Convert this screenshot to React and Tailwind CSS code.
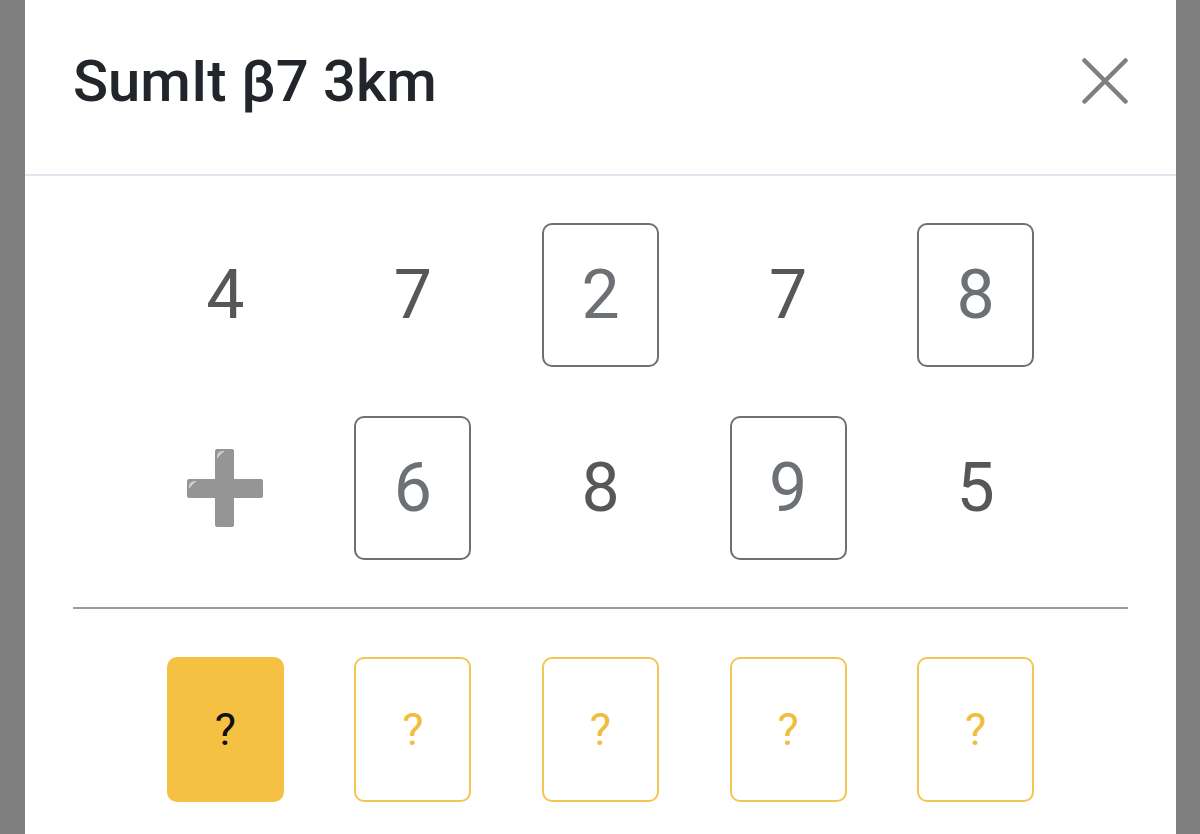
import React from "react";

const topRow = [
  { v: "4", boxed: false },
  { v: "7", boxed: false },
  { v: "2", boxed: true },
  { v: "7", boxed: false },
  { v: "8", boxed: true },
];

const bottomRow = [
  { v: "6", boxed: true },
  { v: "8", boxed: false },
  { v: "9", boxed: true },
  { v: "5", boxed: false },
];

function CloseIcon() {
  return (
    <svg width="46" height="46" viewBox="0 0 46 46" fill="none">
      <path
        d="M2.5 2.5L43.5 43.5M43.5 2.5L2.5 43.5"
        stroke="#7f7f7f"
        strokeWidth="4.5"
        strokeLinecap="round"
      />
    </svg>
  );
}

function PlusEmoji() {
  return (
    <svg width="76" height="78" viewBox="0 0 76 78">
      <rect x="28" y="0" width="19" height="78" rx="2" fill="#959595" />
      <rect x="0" y="30" width="76" height="19" rx="2" fill="#959595" />
      <path d="M30 9 C30 4 32 2 37 2 L38 2 C35 4 32 6 31 9 Z" fill="#d2d2d2" />
      <path d="M2 39 C2 34 4 32 9 32 L10 32 C7 34 4 36 3 39 Z" fill="#d2d2d2" />
    </svg>
  );
}

function Cell({ value, boxed }) {
  return (
    <div className="flex justify-center">
      <div
        className={`w-[117px] h-[144px] flex items-center justify-center rounded-[10px] text-[68px] leading-none ${
          boxed ? "border-2 border-[#707070] text-[#6d7074]" : "text-[#575757]"
        }`}
      >
        {value}
      </div>
    </div>
  );
}

function AnswerBox({ active }) {
  return (
    <div className="flex justify-center">
      <div
        className={`w-[117px] h-[145px] flex items-center justify-center rounded-[10px] text-[45px] leading-none ${
          active
            ? "bg-[#f5c143] text-[#111111]"
            : "border-2 border-[#f3c553] text-[#f1bd3e]"
        }`}
      >
        ?
      </div>
    </div>
  );
}

export default function App() {
  return (
    <div
      className="h-[834px] overflow-hidden bg-[#7f7f7f] pl-[25px] pr-[24px]"
      style={{ fontFamily: "Roboto, 'Liberation Sans', sans-serif" }}
    >
      <div className="h-full bg-white">
        {/* Header */}
        <div className="h-[176px] flex items-center justify-between px-12 pb-[12px] border-b-2 border-[#e4e4ee]">
          <h1 className="text-[58px] leading-none font-medium text-[#22262b]">
            SumIt β7 3km
          </h1>
          <button className="block">
            <CloseIcon />
          </button>
        </div>

        {/* Puzzle */}
        <div className="w-[938px] mx-auto pt-[47px] grid grid-cols-5 gap-y-[49px]">
          {topRow.map((c, i) => (
            <Cell key={"t" + i} value={c.v} boxed={c.boxed} />
          ))}
          <div className="flex justify-center items-center">
            <PlusEmoji />
          </div>
          {bottomRow.map((c, i) => (
            <Cell key={"b" + i} value={c.v} boxed={c.boxed} />
          ))}
        </div>

        <div className="mx-12 mt-[47px] h-[2px] bg-[#9b9b9b]" />

        {/* Answer */}
        <div className="w-[938px] mx-auto pt-[48px] grid grid-cols-5">
          <AnswerBox active />
          <AnswerBox />
          <AnswerBox />
          <AnswerBox />
          <AnswerBox />
        </div>
      </div>
    </div>
  );
}
